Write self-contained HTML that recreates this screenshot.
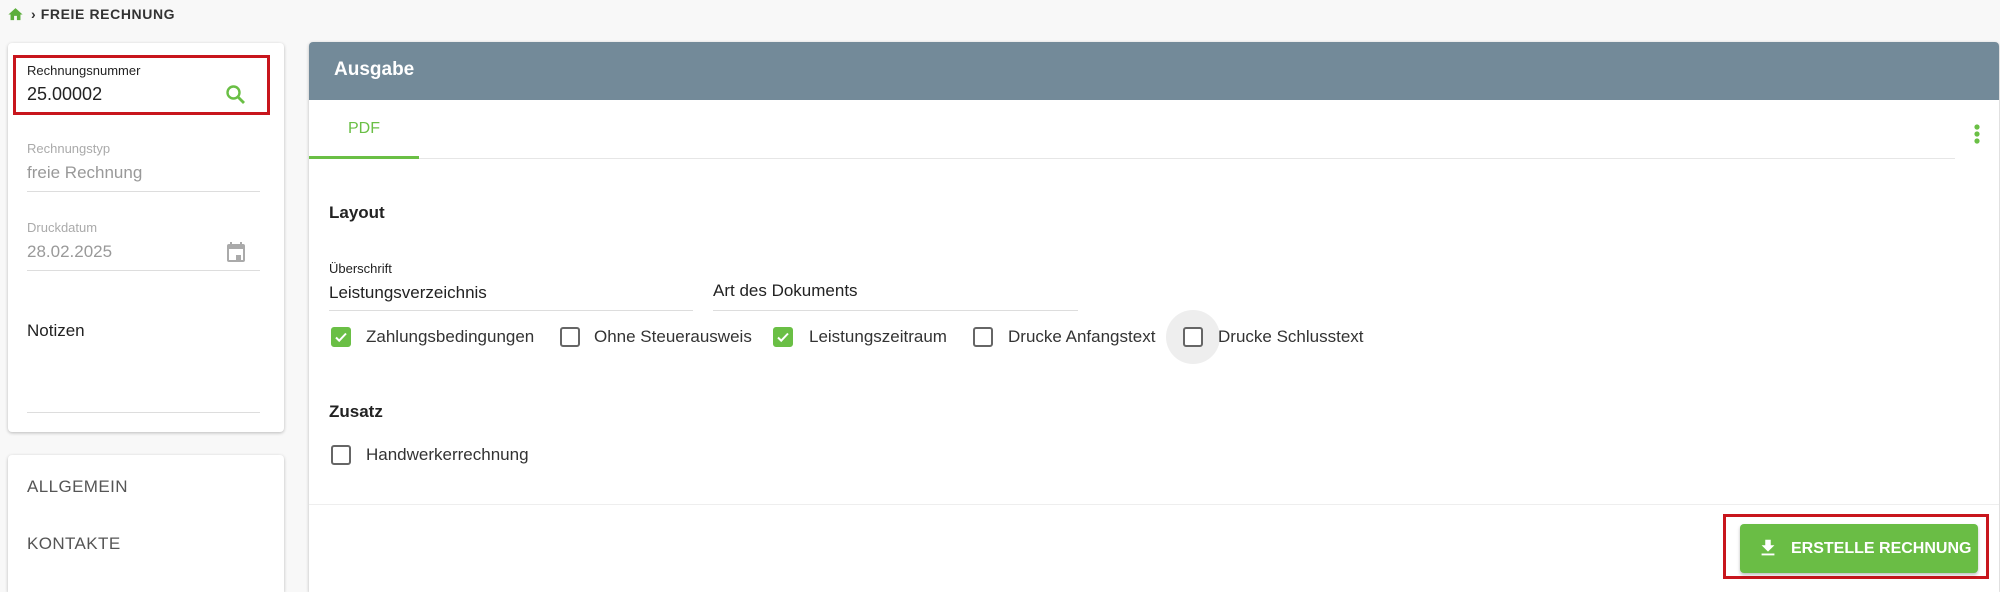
<!DOCTYPE html>
<html style="width:2000px;height:592px;overflow:hidden"><head><meta charset="utf-8"><style>
*{margin:0;padding:0;box-sizing:border-box}
body{width:2000px;height:592px;background:#f8f8f8;font-family:"Liberation Sans",sans-serif;color:#222;position:relative;overflow:hidden}
.a{position:absolute;white-space:nowrap}
.card{position:absolute;background:#fff;border-radius:4px 4px 0 0;box-shadow:0 1px 3px rgba(0,0,0,.25)}
.line{position:absolute;height:1px;background:#ddd}
.cb{position:absolute;width:20px;height:20px;border:2px solid #666;border-radius:3px;background:#fff}
.cb.on{background:#6abf45;border-color:#6abf45}
.lbl{font-size:17px;color:#333}
</style></head><body>
<svg class="a" style="left:7px;top:6px" width="17" height="17" viewBox="0 0 24 24"><path d="M10 20v-6h4v6h5v-8h3L12 3 2 12h3v8z" fill="#5cae3c"/></svg>
<div class="a" style="left:31px;top:6px;font-size:14px;font-weight:bold;letter-spacing:.6px;color:#333">› FREIE RECHNUNG</div>

<div class="card" style="left:8px;top:43px;width:276px;height:389px;border-radius:4px"></div>
<div class="a" style="left:13px;top:55px;width:257px;height:60px;border:3px solid #c8161d"></div>
<div class="a" style="left:27px;top:63px;font-size:13px;color:#222">Rechnungsnummer</div>
<div class="a" style="left:27px;top:84px;font-size:18px;color:#222">25.00002</div>
<svg class="a" style="left:224px;top:83px" width="24" height="24" viewBox="0 0 24 24"><circle cx="9.5" cy="9.5" r="6" fill="none" stroke="#6abf45" stroke-width="2.4"/><path d="M14 14l6 6" stroke="#6abf45" stroke-width="2.8"/></svg>
<div class="a" style="left:27px;top:141px;font-size:13px;color:#aaa">Rechnungstyp</div>
<div class="a" style="left:27px;top:163px;font-size:17px;color:#999">freie Rechnung</div>
<div class="line" style="left:27px;top:191px;width:233px"></div>
<div class="a" style="left:27px;top:220px;font-size:13px;color:#aaa">Druckdatum</div>
<div class="a" style="left:27px;top:242px;font-size:17px;color:#999">28.02.2025</div>
<svg class="a" style="left:224px;top:240px" width="24" height="24" viewBox="0 0 24 24"><path d="M19 4h-1V2h-2v2H8V2H6v2H5a2 2 0 0 0-2 2v14a2 2 0 0 0 2 2h14a2 2 0 0 0 2-2V6a2 2 0 0 0-2-2zm0 16H5V9h14zm-7-5h5v5h-5z" fill="#aaa"/></svg>
<div class="line" style="left:27px;top:270px;width:233px"></div>
<div class="a" style="left:27px;top:321px;font-size:17px">Notizen</div>
<div class="line" style="left:27px;top:412px;width:233px"></div>

<div class="card" style="left:8px;top:455px;width:276px;height:137px"></div>
<div class="a" style="left:27px;top:477px;font-size:17px;color:#555;letter-spacing:.4px">ALLGEMEIN</div>
<div class="a" style="left:27px;top:534px;font-size:17px;color:#555;letter-spacing:.4px">KONTAKTE</div>

<div class="card" style="left:309px;top:42px;width:1690px;height:550px"></div>
<div class="a" style="left:309px;top:42px;width:1690px;height:58px;background:#738a99;border-radius:4px 4px 0 0"></div>
<div class="a" style="left:334px;top:59px;font-size:19px;font-weight:bold;color:#fff">Ausgabe</div>
<div class="a" style="left:348px;top:120px;font-size:16px;color:#6abf45">PDF</div>
<div class="line" style="left:309px;top:158px;width:1646px;background:#e6e6e6"></div>
<div class="a" style="left:309px;top:156px;width:110px;height:3px;background:#6abf45"></div>
<svg class="a" style="left:1970px;top:122px" width="14" height="24" viewBox="0 0 14 24"><circle cx="7" cy="5" r="2.6" fill="#6abf45"/><circle cx="7" cy="12" r="2.6" fill="#6abf45"/><circle cx="7" cy="19" r="2.6" fill="#6abf45"/></svg>

<div class="a" style="left:329px;top:203px;font-size:17px;font-weight:bold">Layout</div>
<div class="a" style="left:329px;top:261px;font-size:13px">Überschrift</div>
<div class="a" style="left:329px;top:283px;font-size:17px">Leistungsverzeichnis</div>
<div class="line" style="left:329px;top:310px;width:364px"></div>
<div class="a" style="left:713px;top:281px;font-size:17px">Art des Dokuments</div>
<div class="line" style="left:713px;top:310px;width:365px"></div>

<div class="a" style="left:1166px;top:310px;width:54px;height:54px;border-radius:50%;background:#eee"></div>
<div class="cb on" style="left:331px;top:327px"><svg width="16" height="16" viewBox="0 0 16 16" style="position:absolute;left:0;top:0"><path d="M3 8.5l3.2 3.2L13 4.5" fill="none" stroke="#fff" stroke-width="2"/></svg></div>
<div class="a lbl" style="left:366px;top:327px">Zahlungsbedingungen</div>
<div class="cb" style="left:560px;top:327px"></div>
<div class="a lbl" style="left:594px;top:327px">Ohne Steuerausweis</div>
<div class="cb on" style="left:773px;top:327px"><svg width="16" height="16" viewBox="0 0 16 16" style="position:absolute;left:0;top:0"><path d="M3 8.5l3.2 3.2L13 4.5" fill="none" stroke="#fff" stroke-width="2"/></svg></div>
<div class="a lbl" style="left:809px;top:327px">Leistungszeitraum</div>
<div class="cb" style="left:973px;top:327px"></div>
<div class="a lbl" style="left:1008px;top:327px">Drucke Anfangstext</div>
<div class="cb" style="left:1183px;top:327px"></div>
<div class="a lbl" style="left:1218px;top:327px">Drucke Schlusstext</div>

<div class="a" style="left:329px;top:402px;font-size:17px;font-weight:bold">Zusatz</div>
<div class="cb" style="left:331px;top:445px"></div>
<div class="a lbl" style="left:366px;top:445px">Handwerkerrechnung</div>

<div class="line" style="left:309px;top:504px;width:1690px;background:#eee"></div>
<div class="a" style="left:1723px;top:514px;width:266px;height:65px;border:3px solid #c8161d"></div>
<div class="a" style="left:1740px;top:524px;width:238px;height:49px;background:#6abd45;border-radius:4px;box-shadow:0 2px 3px rgba(0,0,0,.25)"></div>
<svg class="a" style="left:1757px;top:537px" width="22" height="22" viewBox="0 0 24 24"><path d="M19 9h-4V3H9v6H5l7 7zM5 18v2h14v-2z" fill="#fff"/></svg>
<div class="a" style="left:1791px;top:540px;font-size:16px;font-weight:bold;color:#fff">ERSTELLE RECHNUNG</div>
</body></html>
